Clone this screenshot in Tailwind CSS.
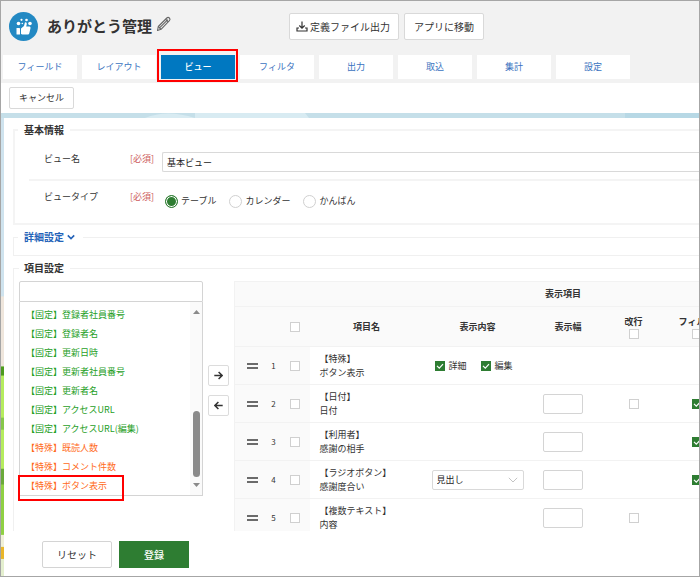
<!DOCTYPE html>
<html lang="ja">
<head>
    <meta charset="UTF-8">
    <meta name="viewport" content="width=device-width, initial-scale=1.0">
    <title>ありがとう管理</title>
    <script src="https://cdn.jsdelivr.net/npm/@tailwindcss/browser@4"></script>
    <style>
        body { font-family: 'Noto Sans CJK JP', sans-serif; }
    </style>
</head>
<body class="bg-white text-[#333] text-[9px] leading-[14px]">
    <div class="h-screen flex flex-col overflow-hidden border border-[#a6a6a6]">
        <!-- Header -->
        <header class="shrink-0 bg-[#f2f2f2] pb-1">
            <div class="flex items-start pl-2 pt-[11px] h-[54px]">
                <svg class="size-[29px] shrink-0" viewBox="0 0 29 29">
                    <circle cx="14.5" cy="14.5" r="14.5" fill="#2389c3"/>
                    <g fill="#fff">
                        <rect x="7.5" y="16" width="3.5" height="6.500" rx=".6"/>
                        <path d="M12 21.800V16.500l3-2.500.9-3.600q2-.6 1.900 1.500l-.6 2.700h3.300q1.300.3 1 1.600l-1.200 5.100q-.3 1.200-1.400 1.200h-5.400q-1.100 0-1.500-.7z"/>
                        <circle cx="9.500" cy="11.500" r="1.800"/>
                        <circle cx="12.500" cy="7.800" r="1.100"/>
                        <circle cx="21" cy="11.500" r="1.800"/>
                        <circle cx="17.500" cy="8" r="1.300"/>
                        <circle cx="13.300" cy="11.500" r=".8"/>
                    </g>
                </svg>
                <h1 class="ml-[9px] mt-1 text-[15px] leading-5 font-bold whitespace-nowrap">ありがとう管理</h1>
                <button aria-label="名前を編集" class="ml-1 mt-1">
                    <svg class="size-4" viewBox="0 0 16 16" fill="none" stroke="#666" stroke-width="1.100" stroke-linejoin="round">
                        <path d="M1.500 14.500l.8-4L10.800 2q1.300-1.200 2.600 0t0 2.700L5 13.300z"/>
                        <path d="M2.300 10.500L5 13.300M3.800 11.600l8-8M9.600 3.200l2.700 2.700"/>
                    </svg>
                </button>
                <div class="ml-[117px] mt-[1px] flex gap-[5px] text-[10px]">
                    <button class="flex h-[27px] items-center gap-0.5 whitespace-nowrap rounded-xs border border-[#d9d9d9] bg-white pl-[6px] pr-2">
                        <svg class="size-3" viewBox="0 0 12 12" fill="none" stroke="#333" stroke-width="1.200">
                            <path d="M6 .5v6.500M3.300 4.500L6 7.200 8.700 4.500M3 7H1v3h10V7H9"/>
                        </svg>
                        定義ファイル出力
                    </button>
                    <button class="h-[27px] whitespace-nowrap rounded-xs border border-[#d9d9d9] bg-white px-[9px]">アプリに移動</button>
                </div>
            </div>
            <nav class="flex gap-[5px] pl-[2px] text-center leading-6 text-[#3b73c0]">
                <a href="#" class="w-[74px] bg-white">フィールド</a>
                <a href="#" class="w-[74px] bg-white">レイアウト</a>
                <a href="#" class="relative w-[74px] bg-[#0078c1] text-white font-medium">ビュー<span class="absolute -top-[6px] -bottom-[3px] -left-1 -right-[3px] border-2 border-[#f00]"></span></a>
                <a href="#" class="w-[74px] bg-white">フィルタ</a>
                <a href="#" class="w-[74px] bg-white">出力</a>
                <a href="#" class="w-[74px] bg-white">取込</a>
                <a href="#" class="w-[74px] bg-white">集計</a>
                <a href="#" class="w-[74px] bg-white">設定</a>
            </nav>
        </header>
        <div class="shrink-0 px-2 pt-1 pb-1">
            <button class="h-[22px] rounded-xs border border-[#d9d9d9] px-[9px]">キャンセル</button>
        </div>

        <!-- Wallpaper behind the form -->
        <div class="flex min-h-0 flex-1 flex-col bg-[#c5dfe9]">
            <svg class="h-[5px] w-full shrink-0" viewBox="0 0 698 5" preserveAspectRatio="none">
                <rect width="698" height="5" fill="#c5dfe9"/>
                <path d="M144 5q22-9 50 0l0-5h110l4 5z" fill="#d8ebf2"/>
                <rect x="624" width="74" height="5" fill="#b7d8e5"/>
            </svg>
            <div class="flex min-h-0 flex-1">
                <svg class="h-full w-[3px] shrink-0" viewBox="0 0 3 457" preserveAspectRatio="none">
                    <rect width="3" height="457" fill="#cfe3ee"/>
                    <rect y="178" width="3" height="70" fill="#efe6dc"/>
                    <rect y="248" width="3" height="209" fill="#b5ec5e"/>
                    <rect y="248" width="3" height="9" fill="#4d9a1e"/>
                    <rect y="299" width="3" height="12" fill="#86c74a"/>
                    <rect y="350" width="3" height="16" fill="#6aa93a"/>
                    <rect y="366" width="3" height="50" fill="#8fd043"/>
                    <rect y="416" width="3" height="12" fill="#f0f0d8"/>
                    <rect y="428" width="3" height="12" fill="#e9b62a"/>
                    <rect y="440" width="3" height="17" fill="#e4efcf"/>
                </svg>

                <form class="flex min-w-0 flex-1 flex-col bg-white">
                    <div class="min-h-0 flex-1 overflow-hidden pl-[9px] pt-[5px]">
                        <!-- 基本情報 -->
                        <fieldset class="h-[102px] border-2 border-r-0 border-[#f4f4f4] pl-[14px]">
                            <legend class="-ml-[11px] px-[6px] text-[10px] font-bold">基本情報</legend>
                            <div class="flex h-[44px] items-start border-b-2 border-[#f4f4f4] pl-[15px] pt-[15px]">
                                <label for="viewName" class="w-[86px]">ビュー名</label>
                                <span class="w-[32px] whitespace-nowrap text-[#cd5c5c]">[必須]</span>
                                <input id="viewName" type="text" value="基本ビュー" class="h-5 min-w-0 flex-1 rounded-l-xs border border-r-0 border-[#d9d9d9] px-1 text-[#222]">
                            </div>
                            <div class="flex items-start pl-[15px] pt-[9px]">
                                <span class="w-[86px]">ビュータイプ</span>
                                <span class="w-[35px] whitespace-nowrap text-[#cd5c5c]">[必須]</span>
                                <div class="mt-1 flex gap-[13px]">
                                    <label class="flex items-center gap-[3px]"><input type="radio" name="viewType" checked class="size-[13px] appearance-none rounded-full border border-[#2e7d32] bg-[#2e7d32] inset-ring-1 inset-ring-white">テーブル</label>
                                    <label class="flex items-center gap-[3px]"><input type="radio" name="viewType" class="size-[13px] appearance-none rounded-full border border-[#d0d0d0]">カレンダー</label>
                                    <label class="flex items-center gap-[3px]"><input type="radio" name="viewType" class="size-[13px] appearance-none rounded-full border border-[#d0d0d0]">かんばん</label>
                                </div>
                            </div>
                        </fieldset>

                        <!-- 詳細設定 -->
                        <fieldset class="mt-[5px] h-[26px] border border-r-0 border-[#f0f0f0] pl-1">
                            <legend class="pl-[6px] pr-2">
                                <button type="button" class="flex items-center gap-[3px] text-[10px] font-bold text-[#2463b8]">
                                    詳細設定
                                    <svg class="h-2 w-2" viewBox="0 0 8 8" fill="none" stroke="#2463b8" stroke-width="1.600"><path d="M.8 2.400L4 5.600l3.200-3.200"/></svg>
                                </button>
                            </legend>
                        </fieldset>

                        <!-- 項目設定 -->
                        <fieldset class="mt-[5px] h-[400px] border border-r-0 border-[#f0f0f0] pl-[5px]">
                            <legend class="pl-[5px] pr-[6px] text-[10px] font-bold">項目設定</legend>
                            <div class="flex items-start pt-[6px]">
                                <div class="w-[184px] shrink-0">
                                    <input type="text" aria-label="項目を検索" class="block h-[21px] w-full rounded-t-xs border border-[#d4d4d4]">
                                    <div class="flex h-[194px] border border-t-0 border-[#d4d4d4]">
                                        <ul class="min-w-0 flex-1 whitespace-nowrap pl-[6px] pt-[3px] leading-[19px] text-[#1fa01f]">
                                            <li>【固定】登録者社員番号</li>
                                            <li>【固定】登録者名</li>
                                            <li>【固定】更新日時</li>
                                            <li>【固定】更新者社員番号</li>
                                            <li>【固定】更新者名</li>
                                            <li>【固定】アクセスURL</li>
                                            <li>【固定】アクセスURL(編集)</li>
                                            <li class="text-[#ff6a1a]">【特殊】既読人数</li>
                                            <li class="text-[#ff6a1a]">【特殊】コメント件数</li>
                                            <li class="relative text-[#ff6a1a]">【特殊】ボタン表示<span class="absolute -left-2 -top-[1px] h-[26px] w-[106px] border-2 border-[#f00]"></span></li>
                                        </ul>
                                        <div class="flex w-3 flex-col items-center bg-[#fafafa] py-2">
                                            <svg class="h-1 w-[7px]" viewBox="0 0 7 4"><path d="M0 4L3.500 0 7 4z" fill="#8a8a8a"/></svg>
                                            <div class="mt-auto mb-[6px] h-[66px] w-[7px] rounded-full bg-[#8a8a8a]"></div>
                                            <svg class="h-1 w-[7px]" viewBox="0 0 7 4"><path d="M0 0L3.500 4 7 0z" fill="#8a8a8a"/></svg>
                                        </div>
                                    </div>
                                </div>
                                <div class="ml-[5px] mt-[84px] flex shrink-0 flex-col gap-[9px]">
                                    <button type="button" aria-label="追加" class="flex h-[21px] w-[21px] items-center justify-center rounded-xs border border-[#dcdcdc]">
                                        <svg class="size-[9px]" viewBox="0 0 9 9" fill="none" stroke="#333" stroke-width="1.500"><path d="M.3 4.500h7.700M4.600 1l3.500 3.500L4.600 8"/></svg>
                                    </button>
                                    <button type="button" aria-label="削除" class="flex h-[21px] w-[21px] items-center justify-center rounded-xs border border-[#dcdcdc]">
                                        <svg class="size-[9px]" viewBox="0 0 9 9" fill="none" stroke="#333" stroke-width="1.500"><path d="M8.700 4.500H1M4.400 1L.9 4.500 4.400 8"/></svg>
                                    </button>
                                </div>
                                <div class="ml-[5px] min-w-0 flex-1 overflow-hidden">
                                    <table class="w-[658px] table-fixed border-collapse border border-[#f2f2f2] [&_td]:p-0 [&_tr]:border-b [&_tr]:border-[#f2f2f2]">
                                        <colgroup>
                                            <col class="w-[32px]"><col class="w-[14px]"><col class="w-[29px]"><col class="w-[114px]"><col class="w-[108px]"><col class="w-[73px]"><col class="w-[58px]"><col class="w-[68px]"><col>
                                        </colgroup>
                                        <thead class="bg-[#fafafa]">
                                            <tr class="h-[25px]"><th colspan="9">表示項目</th></tr>
                                            <tr class="h-10">
                                                <th></th>
                                                <th></th>
                                                <th><input type="checkbox" aria-label="すべて選択" class="block mx-auto size-[10px] appearance-none border border-[#d0d0d0] bg-white"></th>
                                                <th>項目名</th>
                                                <th>表示内容</th>
                                                <th>表示幅</th>
                                                <th><label>改行<input type="checkbox" class="mx-auto block size-[10px] appearance-none border border-[#d0d0d0] bg-white"></label></th>
                                                <th><label>フィルタ<input type="checkbox" class="mx-auto block size-[10px] appearance-none border border-[#d0d0d0] bg-white"></label></th>
                                                <th></th>
                                            </tr>
                                        </thead>
                                        <tbody id="itemList"></tbody>
                                    </table>
                                </div>
                            </div>
                        </fieldset>
                    </div>

                    <div class="flex shrink-0 gap-[7px] pl-[38px] pt-[10px] pb-2 text-[10px]">
                        <button type="reset" class="h-[27px] w-[70px] rounded-xs border border-[#d4d4d4]">リセット</button>
                        <button type="submit" class="h-[27px] w-[70px] bg-[#2e7d32] font-medium text-white">登録</button>
                    </div>
                </form>
            </div>
        </div>
    </div>

    <script>
        const items = [
            { type: '特殊', name: 'ボタン表示', content: 'buttons' },
            { type: '日付', name: '日付', width: true, wrap: true, filter: true },
            { type: '利用者', name: '感謝の相手', width: true, filter: true },
            { type: 'ラジオボタン', name: '感謝度合い', content: 'select', width: true, filter: true },
            { type: '複数テキスト', name: '内容', width: true, wrap: true },
        ];

        function emptyBox(label) {
            return `<input type="checkbox" aria-label="${label}" class="block mx-auto size-[10px] appearance-none border border-[#d0d0d0] bg-white">`;
        }

        function checkedBox(label) {
            return `
                <span class="relative inline-block size-[10px] align-middle">
                    <input type="checkbox" checked aria-label="${label}" class="absolute inset-0 size-[10px] appearance-none bg-[#2e7d32]">
                    <svg class="pointer-events-none absolute inset-0 size-[10px]" viewBox="0 0 10 10" fill="none" stroke="#fff" stroke-width="1.200"><path d="M2 4.800l2.300 2.400L8 3.200"/></svg>
                </span>`;
        }

        function renderContent(item) {
            if (item.content === 'buttons') {
                return `<div class="flex gap-[14px] pl-[11px]">
                    <label class="flex items-center gap-1">${checkedBox('詳細')}詳細</label>
                    <label class="flex items-center gap-1">${checkedBox('編集')}編集</label>
                </div>`;
            }
            if (item.content === 'select') {
                return `<div class="relative mx-2">
                    <select aria-label="表示内容" class="h-5 w-full appearance-none rounded-xs border border-[#d9d9d9] px-1 text-[#222]"><option>見出し</option></select>
                    <svg class="pointer-events-none absolute right-[6px] top-[7px] h-[6px] w-[10px]" viewBox="0 0 10 6" fill="none" stroke="#c4c4c4"><path d="M.8.8L5 5 9.200.8"/></svg>
                </div>`;
            }
            return '';
        }

        function renderItems() {
            document.getElementById('itemList').innerHTML = items.map((item, i) => `
                <tr class="h-[38px]">
                    <td class="bg-[#fafafa]">
                        <svg class="ml-3 h-[6px] w-[11px]" viewBox="0 0 11 6" fill="#6b6b6b"><path d="M0 0h11v2H0zM0 4h11v2H0z"/></svg>
                    </td>
                    <td class="bg-[#fafafa] text-center text-[8px]">${i + 1}</td>
                    <td class="bg-[#fafafa]">${emptyBox('選択')}</td>
                    <td><div class="whitespace-nowrap pl-[10px]">【${item.type}】<br>${item.name}</div></td>
                    <td>${renderContent(item)}</td>
                    <td>${item.width ? '<input type="text" aria-label="表示幅" class="ml-[11px] block h-5 w-10 rounded-xs border border-[#d4d4d4]">' : ''}</td>
                    <td>${item.wrap ? emptyBox('改行') : ''}</td>
                    <td class="text-center">${item.filter ? checkedBox('フィルタ') : ''}</td>
                    <td></td>
                </tr>`).join('');
        }

        renderItems();
    </script>
</body>
</html>
